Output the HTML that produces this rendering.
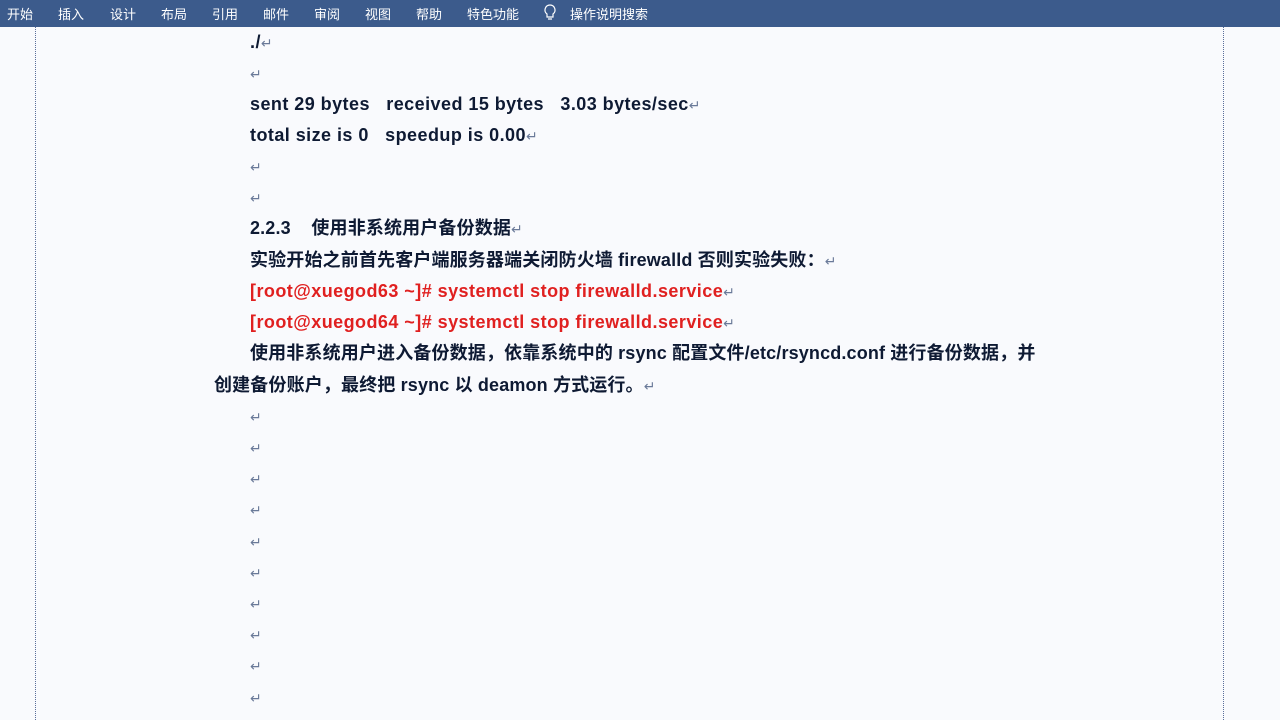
<!DOCTYPE html>
<html><head><meta charset="utf-8"><style>
html,body{margin:0;padding:0;width:1280px;height:720px;overflow:hidden;background:#f9fafd;}
.bar{position:absolute;left:0;top:0;width:1280px;height:27px;background:#3c5b8c;}
.tab{position:absolute;top:4px;color:#fff;font:13px "Liberation Sans","Noto Sans CJK SC",sans-serif;}
.vl{position:absolute;top:27px;height:693px;border-left:1px dotted #5a6e9a;}
.l{position:absolute;white-space:pre;font:bold 18px "Liberation Sans","Noto Sans CJK SC",sans-serif;color:#0e1a33;letter-spacing:0.45px;line-height:22px;}
.c{letter-spacing:0.15px;}
.r{color:#e02020;}
.m{color:#6a7a99;font-weight:normal;font-size:14px;}
</style></head><body>
<div class="bar"></div>
<div class="tab" style="left:7px">开始</div>
<div class="tab" style="left:58px">插入</div>
<div class="tab" style="left:110px">设计</div>
<div class="tab" style="left:161px">布局</div>
<div class="tab" style="left:212px">引用</div>
<div class="tab" style="left:263px">邮件</div>
<div class="tab" style="left:314px">审阅</div>
<div class="tab" style="left:365px">视图</div>
<div class="tab" style="left:416px">帮助</div>
<div class="tab" style="left:467px">特色功能</div>
<svg style="position:absolute;left:543px;top:4px" width="14" height="18" viewBox="0 0 14 18"><path d="M7 1a5 5 0 0 0-3 9v3h6v-3a5 5 0 0 0-3-9zM5 15h4" stroke="#fff" fill="none" stroke-width="1.2"/></svg>
<div class="tab" style="left:570px">操作说明搜索</div>
<div class="vl" style="left:35px"></div>
<div class="vl" style="left:1223px"></div>
<div class="l" style="left:250px;top:31px">./<span class="m">↵</span></div>
<div class="l" style="left:250px;top:62px"><span class="m">↵</span></div>
<div class="l" style="left:250px;top:93px">sent 29 bytes   received 15 bytes   3.03 bytes/sec<span class="m">↵</span></div>
<div class="l" style="left:250px;top:124px">total size is 0   speedup is 0.00<span class="m">↵</span></div>
<div class="l" style="left:250px;top:155px"><span class="m">↵</span></div>
<div class="l" style="left:250px;top:186px"><span class="m">↵</span></div>
<div class="l c" style="left:250px;top:217px">2.2.3    使用非系统用户备份数据<span class="m">↵</span></div>
<div class="l c" style="left:250px;top:249px">实验开始之前首先客户端服务器端关闭防火墙 firewalld 否则实验失败：<span class="m">↵</span></div>
<div class="l r" style="left:250px;top:280px">[root@xuegod63 ~]# systemctl stop firewalld.service<span class="m">↵</span></div>
<div class="l r" style="left:250px;top:311px">[root@xuegod64 ~]# systemctl stop firewalld.service<span class="m">↵</span></div>
<div class="l c" style="left:250px;top:342px">使用非系统用户进入备份数据，依靠系统中的 rsync 配置文件/etc/rsyncd.conf 进行备份数据，并</div>
<div class="l c" style="left:214px;top:374px">创建备份账户，最终把 rsync 以 deamon 方式运行。<span class="m">↵</span></div>
<div class="l" style="left:250px;top:405px"><span class="m">↵</span></div>
<div class="l" style="left:250px;top:436px"><span class="m">↵</span></div>
<div class="l" style="left:250px;top:467px"><span class="m">↵</span></div>
<div class="l" style="left:250px;top:498px"><span class="m">↵</span></div>
<div class="l" style="left:250px;top:530px"><span class="m">↵</span></div>
<div class="l" style="left:250px;top:561px"><span class="m">↵</span></div>
<div class="l" style="left:250px;top:592px"><span class="m">↵</span></div>
<div class="l" style="left:250px;top:623px"><span class="m">↵</span></div>
<div class="l" style="left:250px;top:654px"><span class="m">↵</span></div>
<div class="l" style="left:250px;top:686px"><span class="m">↵</span></div>
</body></html>
